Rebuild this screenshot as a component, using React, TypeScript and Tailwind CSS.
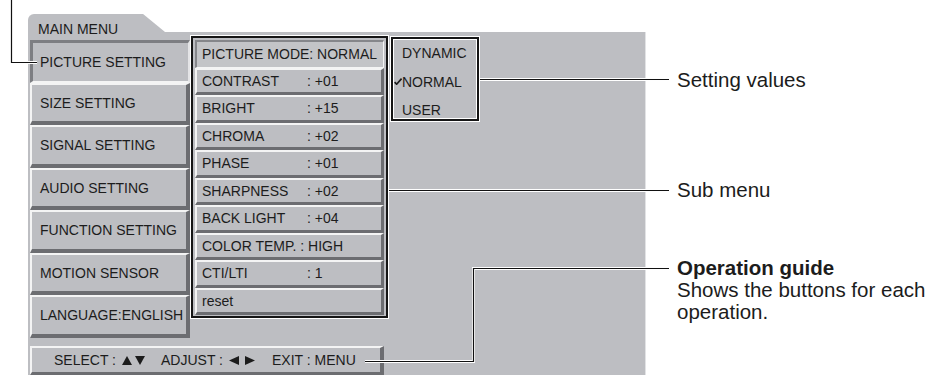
import React from "react";

// bevel styles of the on-screen menu
const raised =
  "border-t-2 border-l-2 border-b-4 border-r-4 border-t-[#f4f4f4] border-l-[#f4f4f4] border-b-[#6c6d71] border-r-[#6c6d71]";
const pressed =
  "border-t-[3px] border-l-[3px] border-b-2 border-r-2 border-t-[#7d7e82] border-l-[#7d7e82] border-b-[#f4f4f4] border-r-[#e4e4e6]";
const rowRaised =
  "border-t-2 border-l-2 border-b-[3px] border-r-[3px] border-t-[#f4f4f4] border-l-[#f4f4f4] border-b-[#6c6d71] border-r-[#6c6d71]";
const rowPressed =
  "border-t-2 border-l-2 border-b border-r border-t-[#85868a] border-l-[#85868a] border-b-[#f4f4f4] border-r-[#f4f4f4]";

const mainItems = [
  "PICTURE SETTING",
  "SIZE SETTING",
  "SIGNAL SETTING",
  "AUDIO SETTING",
  "FUNCTION SETTING",
  "MOTION SENSOR",
  "LANGUAGE:ENGLISH",
];

const subItems: [string, string][] = [
  ["CONTRAST", ": +01"],
  ["BRIGHT", ": +15"],
  ["CHROMA", ": +02"],
  ["PHASE", ": +01"],
  ["SHARPNESS", ": +02"],
  ["BACK LIGHT", ": +04"],
];

function Tri({ dir }: { dir: "up" | "down" | "left" | "right" }) {
  const pts = {
    up: "5,0 10,9 0,9",
    down: "0,0 10,0 5,9",
    left: "0,4.5 10,0 10,9",
    right: "0,0 10,4.5 0,9",
  }[dir];
  return (
    <svg width="10" height="9" viewBox="0 0 10 9" className="block shrink-0">
      <polygon points={pts} fill="#1c1c1c" />
    </svg>
  );
}

export default function App() {
  const lines = [
    "M11.5 0 V62.5 H37",
    "M480 79.5 H669",
    "M389 190.5 H669",
    "M365 361.5 H473.5 V268.5 H669",
  ];

  return (
    <div className="relative flex h-[375px] w-[937px] overflow-hidden bg-white font-['Liberation_Sans',Arial,Helvetica,sans-serif] text-[#1c1c1c]">
      {/* menu screen */}
      <div className="ml-[28px] flex w-[618px] shrink-0 flex-col pt-[14px]">
        <div className="h-[18px] w-[137px] rounded-tl-[6px] bg-[#bdbec2] pl-[10px] pt-[7px] text-[14px] leading-[16px] [clip-path:polygon(0_0,84%_0,100%_100%,100%_200%,0_200%)]">
          MAIN MENU
        </div>
        <div className="flex h-[343px] flex-col border-r border-r-[#e2e3e5] bg-[#bdbec2] pl-[2px] text-[14px] leading-[16px]">
          <div className="flex items-start">
            {/* main menu buttons */}
            <div className="mt-[8px] flex w-[160px] shrink-0 flex-col">
              {mainItems.map((item, i) => (
                <div
                  key={item}
                  className={`flex h-[42.5px] items-center whitespace-nowrap ${
                    i === 0 ? pressed + " pl-[7px]" : raised + " pl-[8px]"
                  }`}
                >
                  {item}
                </div>
              ))}
            </div>

            {/* sub menu */}
            <div className="ml-[1px] mt-[4px] border-2 border-[#151515] px-[2px] pb-[1px] pt-[2px] shadow-[0_0_0_1px_#ffffff]">
              <div className="flex w-[189px] flex-col">
                <div className={`flex h-[27.5px] items-center whitespace-nowrap bg-[#c3c4c7] pl-[5px] ${rowPressed}`}>
                  PICTURE MODE: NORMAL
                </div>
                {subItems.map(([k, v]) => (
                  <div key={k} className={`flex h-[27.5px] items-center whitespace-nowrap pl-[5px] ${rowRaised}`}>
                    <span className="w-[105px]">{k}</span>
                    <span>{v}</span>
                  </div>
                ))}
                <div className={`flex h-[27.5px] items-center whitespace-nowrap pl-[5px] ${rowRaised}`}>
                  COLOR TEMP. : HIGH
                </div>
                <div className={`flex h-[27.5px] items-center whitespace-nowrap pl-[5px] ${rowRaised}`}>
                  <span className="w-[105px]">CTI/LTI</span>
                  <span>: 1</span>
                </div>
                <div className={`flex h-[27.5px] items-center whitespace-nowrap pl-[5px] ${rowRaised}`}>
                  reset
                </div>
              </div>
            </div>

            {/* setting values */}
            <div className="ml-[3px] mt-[5px] flex w-[88px] flex-col gap-[12.5px] border-2 border-[#151515] pb-[1px] pt-[6px] shadow-[0_0_0_1px_#ffffff,inset_0_0_0_1px_#ffffff]">
              {["DYNAMIC", "NORMAL", "USER"].map((v) => (
                <div key={v} className="flex items-center">
                  <span className="flex w-[9px] justify-end pl-[1px]">
                    {v === "NORMAL" && (
                      <svg width="8" height="7" viewBox="0 0 8 7">
                        <path d="M0.6 4.2 L2.6 6.2 L7.6 0.6" fill="none" stroke="#1c1c1c" strokeWidth="1.7" />
                      </svg>
                    )}
                  </span>
                  <span>{v}</span>
                </div>
              ))}
            </div>
          </div>

          {/* operation guide bar */}
          <div className={`mt-[8.5px] flex h-[29px] w-[354px] items-center whitespace-nowrap pl-[22px] ${raised} border-b-[3px]`}>
            <span>SELECT :</span>
            <span className="ml-[6px]"><Tri dir="up" /></span>
            <span className="ml-[3px]"><Tri dir="down" /></span>
            <span className="ml-[16px]">ADJUST :</span>
            <span className="ml-[6px]"><Tri dir="left" /></span>
            <span className="ml-[6px]"><Tri dir="right" /></span>
            <span className="ml-[17px]">EXIT : MENU</span>
          </div>
        </div>
      </div>

      {/* callout labels */}
      <div className="ml-[31px] flex flex-col text-[20.5px] leading-[22px] whitespace-nowrap">
        <div className="mt-[69px]">Setting values</div>
        <div className="mt-[88px]">Sub menu</div>
        <div className="mt-[56px] font-bold">Operation guide</div>
        <div>Shows the buttons for each</div>
        <div>operation.</div>
      </div>

      {/* callout lines */}
      <svg className="pointer-events-none absolute inset-0" width="937" height="375">
        <g fill="none" stroke="#ffffff" strokeWidth="3">
          {lines.map((d) => (
            <path key={d} d={d} />
          ))}
        </g>
        <g fill="none" stroke="#111111" strokeWidth="1.2">
          {lines.map((d) => (
            <path key={d} d={d} />
          ))}
        </g>
      </svg>
    </div>
  );
}
